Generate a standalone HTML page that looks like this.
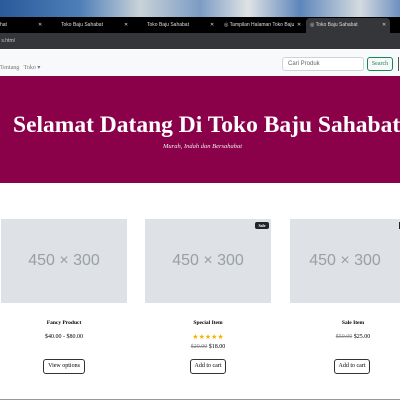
<!DOCTYPE html>
<html><head><meta charset="utf-8"><style>
*{margin:0;padding:0;box-sizing:border-box}
body{width:400px;height:400px;overflow:hidden;background:#fff;font-family:"Liberation Serif",serif;position:relative}
.sky{position:absolute;left:0;top:0;width:400px;height:17px;background:linear-gradient(90deg,#2a5a9a 0%,#4f7fb8 20%,#c9d2d8 35%,#7c9cc4 50%,#dfe3e4 62%,#5d86bb 75%,#d4dbe0 90%,#6e90c0 100%)}
.tabs{position:absolute;top:17px;left:0;width:400px;height:16px;background:#000;color:#ddd;font:5px "Liberation Sans",sans-serif}
.tab{position:absolute;top:5px}
.act{position:absolute;left:306px;top:1px;width:84px;height:15px;background:#35363a;border-radius:4px 4px 0 0}
.addr{position:absolute;top:33px;left:0;width:400px;height:16px;background:#35363a;color:#ccc;font:5px "Liberation Sans",sans-serif;padding:5px 0 0 0}
.nav{position:absolute;top:50px;left:0;width:400px;height:26px;background:#f8f9fa;font-size:6px;color:#777}
.hero{position:absolute;top:76px;left:0;width:400px;height:107px;background:#8a0049;color:#fff;overflow:hidden}
.hero h1{position:absolute;left:13px;top:36px;font-size:23.5px;font-weight:bold;white-space:nowrap}
.hero p{position:absolute;left:163px;top:67px;font-size:6.5px;font-style:italic;color:#eee}
.card{position:absolute;top:219px;width:126px;height:84px;background:#dee2e6;color:#9a9fa4;font:16px "Liberation Sans",sans-serif;text-align:center;line-height:84px;overflow:hidden}
.t{position:absolute;font-size:5.5px;font-weight:bold;text-align:center;width:126px;top:320px}
.pr{position:absolute;font-size:6px;text-align:center;width:126px}
.btn{position:absolute;top:359px;height:15px;border:1px solid #333;border-radius:3px;font-size:6px;text-align:center;line-height:13px}
s{color:#888}
</style></head><body>
<div class="sky"></div>
<div class="tabs">
<div class="tab" style="left:0">hat</div><div class="tab" style="left:38px">✕</div>
<div class="tab" style="left:61px">Toko Baju Sahabat</div><div class="tab" style="left:124px">✕</div>
<div class="tab" style="left:147px">Toko Baju Sahabat</div><div class="tab" style="left:210px">✕</div>
<div class="tab" style="left:224px">◎ Tampilan Halaman Toko Baju</div><div class="tab" style="left:297px">✕</div>
<div class="act"></div>
<div class="tab" style="left:310px">◎ Toko Baju Sahabat</div><div class="tab" style="left:382px">✕</div>
</div>
<div class="addr">&nbsp;s.html</div>
<div class="nav">
<span style="position:absolute;left:0;top:14px">Tentang &nbsp; Toko ▾</span>
</div>
<div style="position:absolute;left:282px;top:57px;width:82px;height:14px;border:1px solid #ced4da;border-radius:3px;background:#fff;font:6px 'Liberation Sans',sans-serif;color:#666;padding:3px 5px">Cari Produk</div>
<div style="position:absolute;left:367px;top:57px;width:26px;height:14px;border:1px solid #198754;border-radius:3px;font-size:6px;color:#198754;text-align:center;line-height:12px">Search</div>
<div style="position:absolute;left:398px;top:57px;width:2px;height:14px;border-left:1px solid #555"></div>
<div class="hero"><h1>Selamat Datang Di Toko Baju Sahabat</h1><p>Murah, Indah dan Bersahabat</p></div>
<div class="card" style="left:1px">450 × 300</div>
<div class="card" style="left:145px">450 × 300</div>
<div class="card" style="left:290px;width:110px">450 × 300</div>
<div style="position:absolute;left:255px;top:222px;width:14px;height:7px;background:#212529;border-radius:2px;color:#fff;font-size:4px;text-align:center;line-height:7px;font-weight:bold">Sale</div>
<div style="position:absolute;left:399px;top:222px;width:1px;height:7px;background:#212529"></div>
<div class="t" style="left:1px">Fancy Product</div>
<div class="t" style="left:145px">Special Item</div>
<div class="t" style="left:290px">Sale Item</div>
<div class="pr" style="left:1px;top:334px">$40.00 - $80.00</div>
<div class="pr" style="left:145px;top:333px;color:#f5b400;font-size:7px">★★★★★</div>
<div class="pr" style="left:145px;top:344px"><s>$20.00</s> $18.00</div>
<div class="pr" style="left:290px;top:334px"><s>$50.00</s> $25.00</div>
<div class="btn" style="left:43px;width:42px">View options</div>
<div class="btn" style="left:190px;width:36px">Add to cart</div>
<div class="btn" style="left:334px;width:36px">Add to cart</div>
<div style="position:absolute;left:0;top:399px;width:400px;height:1px;background:#999"></div>
</body></html>
